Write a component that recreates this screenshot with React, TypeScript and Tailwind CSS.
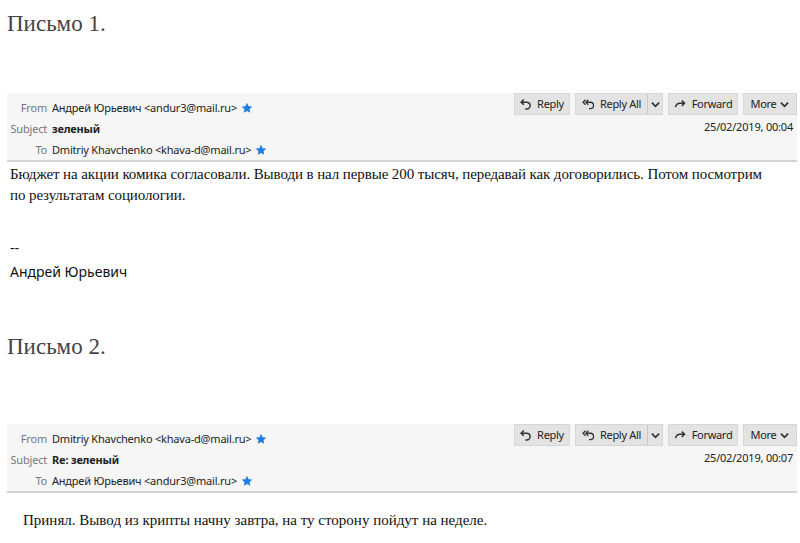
import React from "react";

const Star = () => (
  <svg width="12" height="12" viewBox="0 0 24 24" className="inline-block ml-[4px] -mt-[2px] align-middle">
    <path d="M12 1.5l3.2 6.8 7.3.9-5.4 5.1 1.4 7.3L12 18l-6.5 3.6 1.4-7.3L1.5 9.2l7.3-.9z" fill="#1f7ee0" />
  </svg>
);

const ReplyIcon = () => (
  <svg width="12" height="12" viewBox="0 0 16 16" className="mr-[5px] shrink-0">
    <path d="M5 2L1.5 5.5 5 9" fill="none" stroke="#333" strokeWidth="2" />
    <path d="M2 5.5h7a4.5 4.5 0 010 9H7" fill="none" stroke="#333" strokeWidth="2" />
  </svg>
);

const ReplyAllIcon = () => (
  <svg width="14" height="12" viewBox="0 0 20 16" className="mr-[4px] shrink-0">
    <path d="M5 2L1.5 5.5 5 9" fill="none" stroke="#333" strokeWidth="1.8" />
    <path d="M9 2L5.5 5.5 9 9" fill="none" stroke="#333" strokeWidth="1.8" />
    <path d="M6 5.5h6a4.5 4.5 0 010 9h-2" fill="none" stroke="#333" strokeWidth="1.8" />
  </svg>
);

const ForwardIcon = () => (
  <svg width="12" height="12" viewBox="0 0 16 16" className="mr-[6px] shrink-0">
    <path d="M2 12c1-4 3-5 6-5h6" fill="none" stroke="#333" strokeWidth="2" />
    <path d="M10.5 3.5L14 7l-3.5 3.5" fill="none" stroke="#333" strokeWidth="2" />
  </svg>
);

const Chevron = () => (
  <svg width="9" height="7" viewBox="0 0 10 7" className="shrink-0">
    <path d="M1 1.5l4 4 4-4" fill="none" stroke="#333" strokeWidth="2" />
  </svg>
);

type HeaderProps = {
  from: string;
  subject: string;
  to: string;
  date: string;
};

const Header = ({ from, subject, to, date }: HeaderProps) => (
  <div className="ml-[7px] mr-[3px] bg-[#f6f6f6] border-b-2 border-[#d4d4d4] h-[69px] relative font-['Noto_Sans',sans-serif] text-[11px] text-[#222] tracking-[-0.2px]">
    <div className="flex flex-col pt-[4px]">
      <div className="flex h-[21px] items-center mt-[1px]">
        <span className="w-[40px] text-right text-[#777] mr-[5px]">From</span>
        <span>{from}</span>
        <Star />
      </div>
      <div className="flex h-[21px] items-center">
        <span className="w-[40px] text-right text-[#777] mr-[5px]">Subject</span>
        <span className="font-bold">{subject}</span>
      </div>
      <div className="flex h-[21px] items-center">
        <span className="w-[40px] text-right text-[#777] mr-[5px]">To</span>
        <span>{to}</span>
        <Star />
      </div>
    </div>
    <div className="absolute right-[0px] top-[0px] flex gap-[5px] text-[11px] tracking-[-0.3px] whitespace-nowrap">
      <div className="flex items-center justify-center w-[56px] h-[22px] bg-[#e3e3e3] border border-[#d6d6d6]">
        <ReplyIcon />Reply
      </div>
      <div className="flex items-center h-[22px] bg-[#e3e3e3] border border-[#d6d6d6]">
        <div className="flex items-center justify-center w-[71px]">
          <ReplyAllIcon />Reply All
        </div>
        <div className="flex items-center justify-center h-full w-[15px] border-l border-[#c8c8c8]">
          <Chevron />
        </div>
      </div>
      <div className="flex items-center justify-center w-[70px] h-[22px] bg-[#e3e3e3] border border-[#d6d6d6]">
        <ForwardIcon />Forward
      </div>
      <div className="flex items-center justify-center w-[54px] h-[22px] bg-[#e3e3e3] border border-[#d6d6d6] gap-[4px]">
        More<Chevron />
      </div>
    </div>
    <div className="absolute right-[4px] top-[26px]">{date}</div>
  </div>
);

export default function App() {
  return (
    <div className="w-[800px] h-[543px] bg-white overflow-hidden">
      <div className="pt-[7px] pl-[7px] h-[93px] font-['Liberation_Serif',serif] text-[23px] text-[#444]">
        Письмо 1.
      </div>
      <Header
        from="Андрей Юрьевич <andur3@mail.ru>"
        subject="зеленый"
        to="Dmitriy Khavchenko <khava-d@mail.ru>"
        date="25/02/2019, 00:04"
      />
      <div className="pl-[10px] pt-[2px] font-['Liberation_Serif',serif] text-[15px] leading-[21px] text-[#111] tracking-[-0.1px]">
        <div className="whitespace-nowrap">Бюджет на акции комика согласовали. Выводи в нал первые 200 тысяч, передавай как договорились. Потом посмотрим</div>
        <div>по результатам социологии.</div>
      </div>
      <div className="pl-[10px] mt-[32px] font-['Noto_Sans',sans-serif] text-[14px] text-[#111] leading-[20px]">
        <div>--</div>
        <div className="mt-[4px]">Андрей Юрьевич</div>
      </div>
      <div className="pt-[48px] pl-[7px] h-[142px] font-['Liberation_Serif',serif] text-[23px] text-[#444]">
        Письмо 2.
      </div>
      <Header
        from="Dmitriy Khavchenko <khava-d@mail.ru>"
        subject="Re: зеленый"
        to="Андрей Юрьевич <andur3@mail.ru>"
        date="25/02/2019, 00:07"
      />
      <div className="pl-[23px] pt-[17px] font-['Liberation_Serif',serif] text-[15px] leading-[21px] text-[#111]">
        Принял. Вывод из крипты начну завтра, на ту сторону пойдут на неделе.
      </div>
    </div>
  );
}
